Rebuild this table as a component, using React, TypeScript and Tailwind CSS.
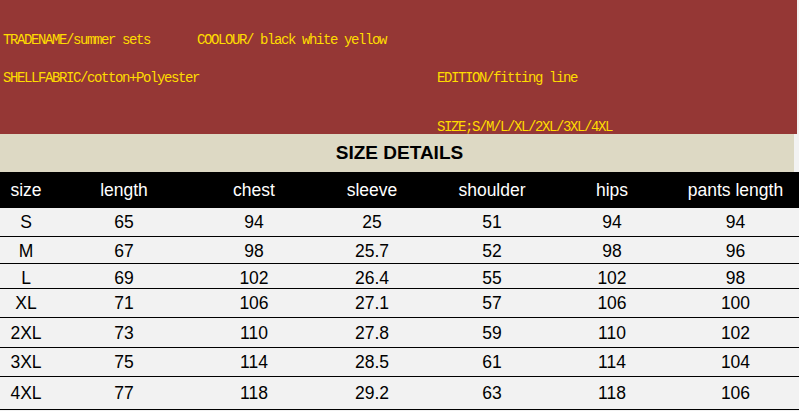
const headers = ["size", "length", "chest", "sleeve", "shoulder", "hips", "pants length"];

const rows: { cells: string[]; h: string }[] = [
  { cells: ["S", "65", "94", "25", "51", "94", "94"], h: "h-[29px]" },
  { cells: ["M", "67", "98", "25.7", "52", "98", "96"], h: "h-[27px]" },
  { cells: ["L", "69", "102", "26.4", "55", "102", "98"], h: "h-[25px]" },
  { cells: ["XL", "71", "106", "27.1", "57", "106", "100"], h: "h-[29px]" },
  { cells: ["2XL", "73", "110", "27.8", "59", "110", "102"], h: "h-[30px]" },
  { cells: ["3XL", "75", "114", "28.5", "61", "114", "104"], h: "h-[29px]" },
  { cells: ["4XL", "77", "118", "29.2", "63", "118", "106"], h: "h-[33px]" },
];

const colClass = "grid grid-cols-[52px_144px_116px_120px_120px_120px_127px]";

const App = () => {
  return (
    <div className="w-[799px] h-[411px] overflow-hidden bg-[#f2f2f2] font-['Liberation_Sans',Arial,sans-serif]">
      <div className="w-[797px] h-[134px] bg-[#953735] pt-[33px] font-['Liberation_Mono','Courier_New',monospace] text-[14px] tracking-[-1.4px] leading-[14px] text-[#ffdc00] whitespace-pre">
        <div className="flex pl-[3px]">
          <span className="w-[194px]">TRADENAME/summer sets</span>
          <span>COOLOUR/ black white yellow</span>
        </div>
        <div className="flex pl-[3px] mt-[24px]">
          <span className="w-[434px]">SHELLFABRIC/cotton+Polyester</span>
          <span>EDITION/fitting line</span>
        </div>
        <div className="pl-[437px] mt-[35px]">SIZE;S/M/L/XL/2XL/3XL/4XL</div>
      </div>

      <div className="w-[794px] h-[38px] bg-[#ddd9c4] flex items-center justify-center pl-[5px]">
        <span className="text-[19px] font-bold text-black">SIZE DETAILS</span>
      </div>

      <div className={`${colClass} h-[36px] bg-black text-white text-[17.5px] items-center border-b border-black pt-[2px]`}>
        {headers.map((h) => (
          <div key={h} className="text-center">
            {h}
          </div>
        ))}
      </div>

      {rows.map((row) => (
        <div
          key={row.cells[0]}
          className={`${colClass} ${row.h} items-center border-b border-black text-[17.5px] text-black pt-[1px]`}
        >
          {row.cells.map((c, i) => (
            <div key={i} className="text-center">
              {c}
            </div>
          ))}
        </div>
      ))}
    </div>
  );
};

export default App;
